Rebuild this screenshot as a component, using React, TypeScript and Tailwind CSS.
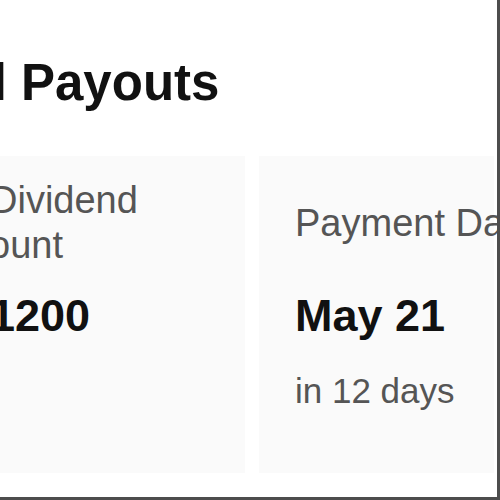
import React from "react";

export default function App() {
  return (
    <div className="w-[500px] h-[500px] bg-white overflow-hidden border-r-[3px] border-b-[3px] border-[#4d4d4d] font-['Liberation_Sans',Arial,sans-serif]">
      <div className="pt-[53px]">
        <h1 className="ml-[-166px] whitespace-nowrap text-[51px] leading-[60px] font-bold text-[#111]">
          Annual Payouts
        </h1>
      </div>
      <div className="mt-[43px] flex gap-[14px]">
        <div className="ml-[-104px] w-[349px] h-[317px] shrink-0 bg-[#fafafa] pl-[36px] pt-[22px]">
          <div className="h-[90px] flex flex-col justify-center text-[38px] leading-[45px] text-[#555] whitespace-nowrap">
            <span className="ml-[58px]">Dividend</span>
            <span>Amount</span>
          </div>
          <div className="mt-[20px] ml-[33px] text-[45px] leading-[56px] font-bold text-[#111]">$1200</div>
        </div>
        <div className="w-[235px] h-[317px] shrink-0 bg-[#fafafa] pl-[36px] pt-[22px]">
          <div className="h-[90px] flex flex-col justify-center text-[38px] leading-[45px] text-[#555] whitespace-nowrap">
            <span>Payment Date</span>
          </div>
          <div className="mt-[20px] text-[45px] leading-[56px] font-bold text-[#111] whitespace-nowrap">May 21</div>
          <div className="mt-[27px] text-[35px] leading-[40px] text-[#555] whitespace-nowrap">in 12 days</div>
        </div>
      </div>
    </div>
  );
}
